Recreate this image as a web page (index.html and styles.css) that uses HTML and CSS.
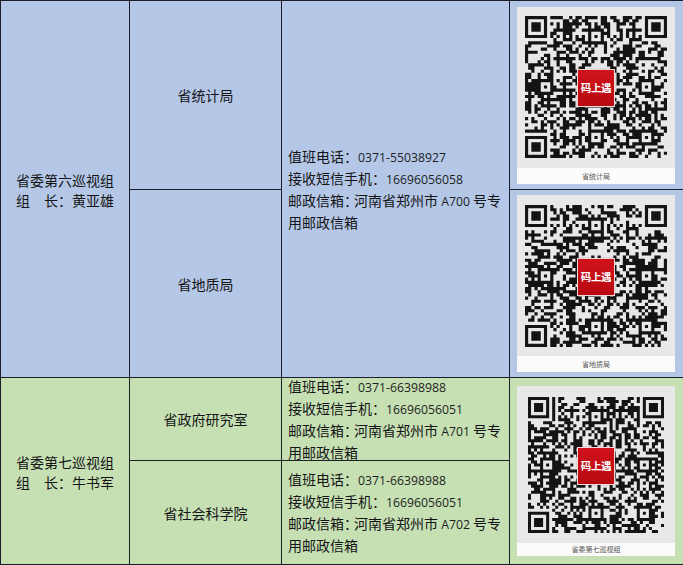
FILE: index.html
```html
<!DOCTYPE html>
<html lang="zh-CN">
<head>
<meta charset="utf-8">
<title>巡视组联系方式</title>
<link rel="stylesheet" href="styles.css">
<script src="script.js" defer></script>
</head>
<body>
<div class="sheet">
  <div class="cell blue group a-g6">
    <div>省委第六巡视组</div>
    <div>组　长：黄亚雄</div>
  </div>
  <div class="cell blue unit a-u1">省统计局</div>
  <div class="cell blue contact a-c6">
    <div>值班电话：<span class="num">0371-55038927</span></div>
    <div>接收短信手机：<span class="num">16696056058</span></div>
    <div>邮政信箱<span class="tight">：</span>河南省郑州市 <span class="num">A700</span> 号专</div>
    <div>用邮政信箱</div>
  </div>
  <div class="cell blue qr a-q1">
    <div class="card">
      <div class="card-img"><div class="qr-code" data-seed="11" data-size="142"></div><div class="logo">码上遇</div></div>
      <div class="card-label">省统计局</div>
    </div>
  </div>
  <div class="cell blue unit a-u2">省地质局</div>
  <div class="cell blue qr a-q2">
    <div class="card">
      <div class="card-img"><div class="qr-code" data-seed="29" data-size="142"></div><div class="logo">码上遇</div></div>
      <div class="card-label">省地质局</div>
    </div>
  </div>

  <div class="cell green group a-g7">
    <div>省委第七巡视组</div>
    <div>组　长：牛书军</div>
  </div>
  <div class="cell green unit a-u3">省政府研究室</div>
  <div class="cell green contact a-c7a">
    <div>值班电话：<span class="num">0371-66398988</span></div>
    <div>接收短信手机：<span class="num">16696056051</span></div>
    <div>邮政信箱<span class="tight">：</span>河南省郑州市 <span class="num">A701</span> 号专</div>
    <div>用邮政信箱</div>
  </div>
  <div class="cell green qr a-q3">
    <div class="card card-sm">
      <div class="card-img"><div class="qr-code" data-seed="47" data-size="136"></div><div class="logo">码上遇</div></div>
      <div class="card-label">省委第七巡视组</div>
    </div>
  </div>
  <div class="cell green unit a-u4">省社会科学院</div>
  <div class="cell green contact a-c7b">
    <div>值班电话：<span class="num">0371-66398988</span></div>
    <div>接收短信手机：<span class="num">16696056051</span></div>
    <div>邮政信箱<span class="tight">：</span>河南省郑州市 <span class="num">A702</span> 号专</div>
    <div>用邮政信箱</div>
  </div>
</div>
</body>
</html>
```

FILE: styles.css
```css
html, body {
  margin: 0;
  padding: 0;
  background: #ffffff;
  overflow: hidden;
}

body {
  font-family: "Noto Sans CJK SC", "Noto Sans", sans-serif;
  font-size: 14px;
  color: #141414;
}

.sheet {
  display: grid;
  grid-template-columns: 128px 151px 227px 173px;
  grid-template-rows: 188px 187px 82px 103px;
  grid-template-areas:
    "g6 u1 c6 q1"
    "g6 u2 c6 q2"
    "g7 u3 c7a q3"
    "g7 u4 c7b q3";
  gap: 1px;
  padding: 1px 0 1px 1px;
  background: #1c1f2a;
  width: max-content;
}

.a-g6 { grid-area: g6; }
.a-u1 { grid-area: u1; }
.a-c6 { grid-area: c6; }
.a-q1 { grid-area: q1; }
.a-u2 { grid-area: u2; }
.a-q2 { grid-area: q2; }
.a-g7 { grid-area: g7; }
.a-u3 { grid-area: u3; }
.a-c7a { grid-area: c7a; }
.a-q3 { grid-area: q3; }
.a-u4 { grid-area: u4; }
.a-c7b { grid-area: c7b; }

.cell {
  min-width: 0;
  min-height: 0;
}

.blue { background: #b4c7e7; }
.green { background: #c6e0b4; }

.group {
  display: flex;
  flex-direction: column;
  justify-content: center;
  align-items: center;
  line-height: 20px;
  padding-top: 1px;
}

.unit {
  display: flex;
  align-items: center;
  justify-content: center;
  line-height: 20px;
}

.contact {
  display: flex;
  flex-direction: column;
  justify-content: center;
  padding-left: 6px;
  line-height: 21px;
  white-space: nowrap;
}

.num {
  font-family: "Open Sans", "Liberation Sans", sans-serif;
  font-size: 12.25px;
  color: #1e1e1e;
}

.tight {
  letter-spacing: -4px;
}

.qr {
  display: flex;
  align-items: center;
  padding-left: 7px;
}

.card {
  width: 158px;
  display: flex;
  flex-direction: column;
  background: #f7f7f7;
}

.card-img {
  position: relative;
  height: 161px;
  background: #e8e8e8;
  display: flex;
  align-items: center;
  justify-content: center;
}

.card-label {
  height: 16px;
  line-height: 16px;
  text-align: center;
  font-size: 7px;
  color: #555555;
  background: #fbfbfb;
}

.card-sm .card-img {
  height: 157px;
}

.card-sm .card-label {
  height: 13px;
  line-height: 13px;
}

.qr-code {
  line-height: 0;
}

.qr-code svg {
  display: block;
}

.logo {
  position: absolute;
  left: 50%;
  top: 50%;
  width: 36px;
  height: 36px;
  margin-left: -19px;
  margin-top: -18px;
  background: linear-gradient(#d0121b, #b80a12);
  border: 1px solid #f3d6d6;
  box-shadow: 0 0 1px rgba(0, 0, 0, 0.4);
  color: #ffffff;
  font-size: 10.5px;
  font-weight: 700;
  line-height: 36px;
  text-align: center;
  letter-spacing: -0.3px;
}
```

FILE: script.js
```js
(function () {
  function rng(seed) {
    var s = seed >>> 0;
    return function () {
      s = (Math.imul(s, 1664525) + 1013904223) >>> 0;
      return s / 4294967296;
    };
  }

  function buildMatrix(seed) {
    var N = 45;
    var m = [], r = [];
    for (var y = 0; y < N; y++) {
      m.push(new Array(N).fill(0));
      r.push(new Array(N).fill(false));
    }
    function finder(ox, oy) {
      for (var dy = -1; dy <= 7; dy++) {
        for (var dx = -1; dx <= 7; dx++) {
          var x = ox + dx, y = oy + dy;
          if (x < 0 || y < 0 || x >= N || y >= N) continue;
          r[y][x] = true;
          var on = false;
          if (dx >= 0 && dx <= 6 && dy >= 0 && dy <= 6) {
            on = dx === 0 || dx === 6 || dy === 0 || dy === 6 ||
              (dx >= 2 && dx <= 4 && dy >= 2 && dy <= 4);
          }
          m[y][x] = on ? 1 : 0;
        }
      }
    }
    finder(0, 0);
    finder(N - 7, 0);
    finder(0, N - 7);
    for (var i = 8; i < N - 8; i++) {
      m[6][i] = i % 2 === 0 ? 1 : 0; r[6][i] = true;
      m[i][6] = i % 2 === 0 ? 1 : 0; r[i][6] = true;
    }
    var al = [[22, 6], [6, 22], [22, 22], [38, 22], [22, 38], [38, 38]];
    al.forEach(function (c) {
      for (var dy = -2; dy <= 2; dy++) {
        for (var dx = -2; dx <= 2; dx++) {
          var x = c[0] + dx, y = c[1] + dy;
          r[y][x] = true;
          m[y][x] = Math.max(Math.abs(dx), Math.abs(dy)) === 1 ? 0 : 1;
        }
      }
    });
    var rand = rng(seed);
    for (var y2 = 0; y2 < N; y2++) {
      for (var x2 = 0; x2 < N; x2++) {
        if (!r[y2][x2]) m[y2][x2] = rand() < 0.52 ? 1 : 0;
      }
    }
    return m;
  }

  function render(el) {
    var seed = parseInt(el.getAttribute('data-seed'), 10) || 1;
    var size = parseInt(el.getAttribute('data-size'), 10) || 140;
    var m = buildMatrix(seed);
    var N = m.length;
    var d = '';
    for (var y = 0; y < N; y++) {
      for (var x = 0; x < N; x++) {
        if (m[y][x]) d += 'M' + x + ' ' + y + 'h1v1h-1z';
      }
    }
    var ns = 'http://www.w3.org/2000/svg';
    var svg = document.createElementNS(ns, 'svg');
    svg.setAttribute('viewBox', '0 0 ' + N + ' ' + N);
    svg.setAttribute('width', size);
    svg.setAttribute('height', size);
    var p = document.createElementNS(ns, 'path');
    p.setAttribute('d', d);
    p.setAttribute('fill', '#141414');
    svg.appendChild(p);
    el.appendChild(svg);
  }

  document.querySelectorAll('.qr-code').forEach(render);
})();
```
